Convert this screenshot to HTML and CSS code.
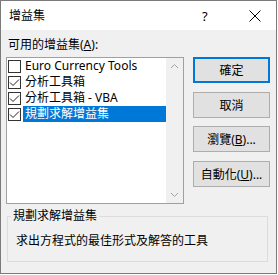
FILE: index.html
```html
<!DOCTYPE html>
<html lang="zh-Hant">
<head>
<meta charset="utf-8">
<title>增益集</title>
<link rel="stylesheet" href="styles.css">
</head>
<body>
<div class="dialog">
  <div class="titlebar">
    <span class="title">增益集</span>
    <span class="help">?</span>
    <span class="close"><svg width="12" height="12" viewBox="0 0 12 12"><path d="M0.5 0.5 L11.5 11.5 M11.5 0.5 L0.5 11.5" stroke="#000" stroke-width="1" fill="none"/></svg></span>
  </div>
  <div class="content">
    <div class="main">
      <div class="left">
        <div class="caption">可用的增益集(<u>A</u>):</div>
        <div class="listbox">
          <ul class="items">
            <li class="item"><span class="check"></span><span class="label">Euro Currency Tools</span></li>
            <li class="item"><span class="check"><svg width="11" height="11" viewBox="0 0 11 11"><path d="M1 5.5 L4 8.5 L10 2.5" stroke="#222" stroke-width="1" fill="none"/></svg></span><span class="label">分析工具箱</span></li>
            <li class="item"><span class="check"><svg width="11" height="11" viewBox="0 0 11 11"><path d="M1 5.5 L4 8.5 L10 2.5" stroke="#222" stroke-width="1" fill="none"/></svg></span><span class="label">分析工具箱 - VBA</span></li>
            <li class="item selected"><span class="check"><svg width="11" height="11" viewBox="0 0 11 11"><path d="M1 5.5 L4 8.5 L10 2.5" stroke="#222" stroke-width="1" fill="none"/></svg></span><span class="label">規劃求解增益集</span></li>
          </ul>
          <div class="scrollbar">
            <svg width="17" height="17" viewBox="0 0 17 17"><path d="M5 10 L8.5 6.5 L12 10" stroke="#a3a3a3" stroke-width="1" fill="none"/></svg>
            <svg width="17" height="17" viewBox="0 0 17 17"><path d="M5 7 L8.5 10.5 L12 7" stroke="#a3a3a3" stroke-width="1" fill="none"/></svg>
          </div>
        </div>
      </div>
      <div class="buttons">
        <button class="btn default">確定</button>
        <button class="btn">取消</button>
        <button class="btn">瀏覽(<u>B</u>)...</button>
        <button class="btn">自動化(<u>U</u>)...</button>
      </div>
    </div>
    <fieldset class="group">
      <legend>規劃求解增益集</legend>
      <p class="desc">求出方程式的最佳形式及解答的工具</p>
    </fieldset>
  </div>
</div>
</body>
</html>
```
FILE: styles.css
```css
html, body {
  margin: 0;
  padding: 0;
  background: #ffffff;
}
body {
  font-family: "Noto Sans", "Noto Sans CJK TC", sans-serif;
  font-size: 12px;
  color: #000;
}
.dialog {
  width: 277px;
  height: 274px;
  box-sizing: border-box;
  border: 1px solid #7a7a7a;
  background: #f0f0f0;
  display: flex;
  flex-direction: column;
}
.titlebar {
  height: 29px;
  flex: none;
  background: #fff;
  display: flex;
  align-items: center;
  padding-left: 8px;
  line-height: 16px;
}
.title {
  flex: 1;
}
.help {
  width: 14px;
  font-size: 13px;
  margin-right: 33px;
  color: #000;
}
.close {
  width: 12px;
  height: 12px;
  margin-right: 15px;
  display: flex;
}
.content {
  padding: 7px 4px 0 5px;
  display: flex;
  flex-direction: column;
}
.main {
  display: flex;
}
.left {
  width: 178px;
}
.caption {
  line-height: 16px;
  padding-left: 2px;
  height: 16px;
  margin-bottom: 4px;
}
.listbox {
  height: 147px;
  box-sizing: border-box;
  border: 1px solid #a0a0a0;
  background: #fff;
  display: flex;
}
.items {
  list-style: none;
  margin: 0;
  padding: 0;
  flex: 1;
}
.item {
  display: flex;
  align-items: center;
  height: 16px;
  line-height: 16px;
}
.check {
  width: 13px;
  height: 13px;
  box-sizing: border-box;
  border: 1px solid #333;
  background: #fff;
  margin-left: 1px;
  margin-right: 2px;
  display: flex;
  align-items: center;
  justify-content: center;
}
.label {
  flex: 1;
  padding-left: 2px;
  white-space: nowrap;
}
.selected .label {
  background: #0078d7;
  color: #fff;
}
.scrollbar {
  width: 17px;
  background: #f0f0f0;
  display: flex;
  flex-direction: column;
  justify-content: space-between;
}
.scrollbar svg {
  display: block;
}
.buttons {
  margin-left: 9px;
  padding-top: 20px;
  display: flex;
  flex-direction: column;
  gap: 8.5px;
}
.btn {
  width: 77px;
  height: 26px;
  box-sizing: border-box;
  border: 1px solid #adadad;
  background: #e1e1e1;
  font: inherit;
  color: #000;
  padding: 0;
  margin: 0;
}
.btn.default {
  border: 1px solid #0078d7;
  box-shadow: inset 0 0 0 1px #0078d7;
}
.group {
  margin: 4px 4px 0 1px;
  padding: 0 8px 12px 8px;
  border: 1px solid #dcdcdc;
  min-width: 0;
}
.group legend {
  padding: 0 2px;
  margin-left: -5px;
  line-height: 16px;
}
.desc {
  margin: 9px 0 0 0;
  line-height: 16px;
}
```
